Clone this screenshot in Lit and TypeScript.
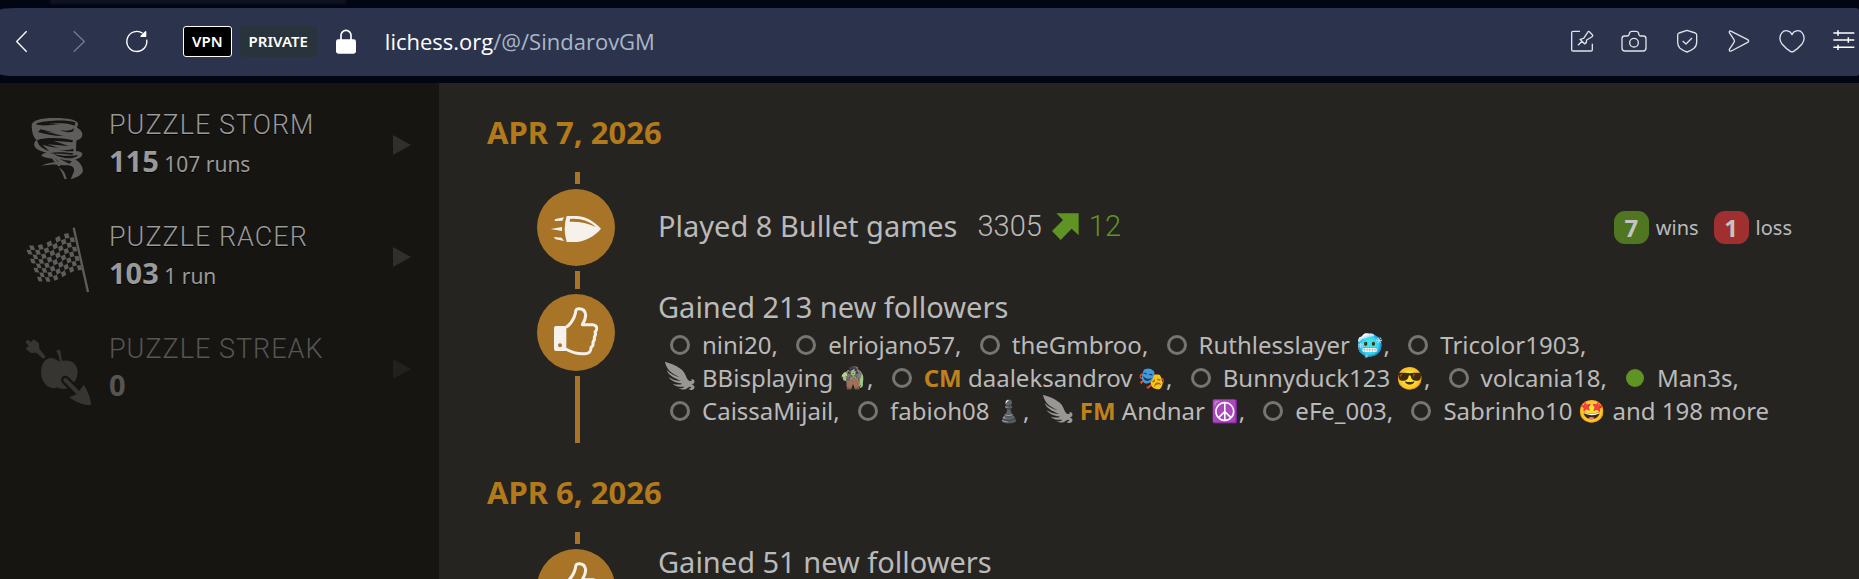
import { LitElement, html, svg, css, nothing } from "lit";
import { customElement, property } from "lit/decorators.js";

type Presence = "offline" | "online" | "patron";
interface Follower {
  name: string;
  title?: string;
  presence?: Presence;
  flair?: string;
}

const FOLLOWERS: Follower[] = [
  { name: "nini20" },
  { name: "elriojano57" },
  { name: "theGmbroo" },
  { name: "Ruthlesslayer", flair: "🥶" },
  { name: "Tricolor1903" },
  { name: "BBisplaying", presence: "patron", flair: "🧌" },
  { name: "daaleksandrov", title: "CM", flair: "🎭" },
  { name: "Bunnyduck123", flair: "😎" },
  { name: "volcania18" },
  { name: "Man3s", presence: "online" },
  { name: "CaissaMijail" },
  { name: "fabioh08", flair: "♟️" },
  { name: "Andnar", title: "FM", presence: "patron", flair: "☮️" },
  { name: "eFe_003" },
  { name: "Sabrinho10", flair: "🤩" },
];

/* ---------- browser toolbar icons ---------- */
const ICONS = {
  back: { box: "21 81 84 84", art: svg`<path d="M80 94 50 124.500 80 155"/>` },
  forward: { box: "196 81 84 84", art: svg`<path d="M222 94 254 124.500 222 155"/>` },
  reload: {
    box: "370 81 84 84",
    art: svg`<path d="M441 119A30 30 0 1 1 429 100"/><path d="M438 95V109H424Z" fill="currentColor"/>`,
  },
  lock: {
    box: "999 81 84 84",
    art: svg`<path d="M1026 122V106a15 15 0 0 1 30 0v16" stroke-width="5"/><rect x="1011" y="118" width="60" height="43" rx="7" fill="currentColor" stroke="none"/>`,
  },
  pin: {
    box: "84 81 84 84",
    art: svg`<path d="M120 94H99q-4 0-4 4v51q0 4 4 4h54q4 0 4-4V131"/><path d="M114 136 126 124M119 117 135 133M122 119Q129 114 131 115L143 97Q145 92 149 96L157 104Q160 108 155 111L140 120Q141 127 134 132"/>`,
  },
  camera: {
    box: "240 81 84 84",
    art: svg`<path d="M254 108h8q4 0 5-4l2-6q2-4 6-4h14q4 0 6 4l2 6q1 4 5 4h8q8 0 8 8v28q0 9-9 9H255q-9 0-9-9v-28q0-8 8-8Z"/><circle cx="282" cy="128" r="13"/>`,
  },
  shield: {
    box: "398 81 84 84",
    art: svg`<path d="M440 91 465 99q4 2 4 6v22q0 12-8 18-10 8-21 11-11-3-21-11-7-6-7-18V105q0-4 4-6Z"/><path d="M427 123 437 132 455 114"/>`,
  },
  send: {
    box: "558 81 84 84",
    art: svg`<path d="M577 94 626 119q6 4 0 8L577 153q-7 2-6-5l14-21q3-4 0-8L571 98q-1-7 6-4Z"/>`,
  },
  heart: {
    box: "714 81 84 84",
    art: svg`<path d="M756 104c-5-14-23-15-30-6-9 10-8 24 0 34 7 8 15 16 25 22q5 3 10 0c10-6 18-14 25-22 8-10 9-24 0-34-7-9-25-8-30 6Z"/>`,
  },
  sliders: {
    box: "870 81 84 84",
    art: svg`<path d="M880 99h63M880 120h63M880 142h63M894 91v16M925 112v16M894 134v16" stroke-width="4.500"/>`,
  },
};

/* ---------- puzzle icons ---------- */
const STORM = svg`
  <path d="M95 108C94 92 120 84 165 84 205 84 236 90 234 103L231 113C250 122 252 140 238 148L229 152 228 183C244 184 250 190 246 196 243 204 232 208 221 210L219 203C228 202 234 198 232 195 205 200 180 197 160 191 180 204 208 207 218 204 238 212 252 232 248 246 244 256 226 264 212 268L222 244C224 230 214 224 190 226 165 222 148 224 124 228 140 219 158 216 176 216L168 208C155 205 140 206 126 199 122 194 128 190 140 188 110 182 100 170 103 160 104 153 108 152 110 150 98 140 96 124 95 108Z"/>
  <path d="M160 206C176 222 190 244 197 267" fill="none" stroke="currentColor" stroke-width="7"/>
  <g class="cut">
    <path d="M112 99C140 91 200 88 226 97L224 107C210 99 170 98 146 101L180 103C150 105 122 109 108 103Z"/>
    <path d="M122 118 165 128 134 124 190 138C160 138 135 133 114 126Z"/>
    <path d="M180 120C200 124 215 122 222 114L220 124C205 129 194 126 180 120Z"/>
    <path d="M112 150C140 142 180 142 219 151L217 157 160 152 206 168 142 163 178 174C150 172 134 166 126 163L148 184C126 176 112 164 112 150Z"/>
    <path d="M162 177C190 183 210 180 220 176L220 184 200 184Z"/>
    <path d="M150 189C175 184 206 188 219 190L218 195C196 190 170 194 150 189Z"/>
    <path d="M178 206 206 213 196 209 216 214 208 221Z"/>
    <path d="M172 229C190 227 210 228 217 234 214 248 208 258 203 264 196 250 188 238 172 229Z"/>
  </g>`;

/** Chequered cloth: a wavy 11×8 grid where every other cell is filled. */
function chequers(): string {
  const cols = 11;
  const rows = 8;
  const at = (c: number, r: number): string => {
    const u = c / cols;
    const v = r / rows;
    const x = 74 + 144 * u + v * (42 - 14 * u);
    const wave = Math.sin(u * Math.PI * 2 - 0.6) * 7;
    const y = 470 - 38 * u + wave + v * (108 + 4 * u);
    return `${x.toFixed(1)} ${y.toFixed(1)}`;
  };
  let d = "";
  for (let c = 0; c < cols; c++)
    for (let r = 0; r < rows; r++)
      if ((c + r) % 2) d += `M${at(c, r)}L${at(c + 1, r)}L${at(c + 1, r + 1)}L${at(c, r + 1)}Z`;
  return d;
}
const RACER = svg`<path d=${chequers()}/><path d="M221 413 264 606" fill="none" stroke="currentColor" stroke-width="7"/>`;

const STREAK = svg`
  <path d="M76 156 84 149 93 157 101 148 117 160 118 176 137 200 130 207 109 188 93 189 77 176 86 167Z"/>
  <path d="M169 184q5-7 12-3l5 33-7 2q-1-20-10-32Z"/>
  <path d="M178 215C200 207 232 212 233 246 232 266 222 282 210 290 204 298 184 299 172 292 158 299 138 292 128 270 118 244 124 206 153 204 166 205 172 211 178 215Z"/>
  <path class="seam" d="M196 270 236 310" fill="none" stroke-width="26" stroke-linecap="round"/>
  <path d="M196 270 232 306" fill="none" stroke="currentColor" stroke-width="12" stroke-linecap="round"/>
  <path d="M251 284Q270 312 274 346 238 346 208 322L226 314 240 300Z"/>`;

/* ---------- timeline icons ---------- */
const BULLET = svg`
  <path d="M320 378h32c28 2 52 18 71 38-19 22-45 37-72 40h-31q-12-40 0-78Z"/>
  <path d="M286 387 312 382 307 392 283 393ZM272 417 306 411V423ZM281 441 305 443 312 453 287 448Z"/>
  <path d="M330 387c30-3 55 5 78 24-25-12-50-17-79-16Z" fill="#a87427"/>`;
const THUMB = svg`
  <path fill-rule="evenodd" d="M168 168h26q5 0 5 5v66q0 4-5 4h-26q-6 0-6-6v-63q0-6 6-6Zm12 52a6 6 0 1 0 0 12 6 6 0 0 0 0-12Z"/>
  <path d="M198 172q16-10 25-32 4-10 4-16 1-8 10-8 18 0 20 18 0 14-10 30h31q13 2 12 12-1 8-5 9 4 10-2 16 2 9-4 15 2 12-6 16 1 18-18 19-30 2-58-14" fill="none" stroke="currentColor" stroke-width="9" stroke-linejoin="round"/>`;

const WING = svg`<path d="M495 277C518 284 548 295 556 316 561 330 566 336 572 335 577 334 577 331 573 329 582 328 586 335 582 341 580 344 578 345 575 346 582 346 586 352 582 358 578 363 569 363 566 358 568 359 573 358 573 354 572 351 568 352 564 355 556 362 543 362 534 357 545 358 550 355 553 352 540 354 526 351 518 343 530 347 540 346 547 343 528 341 512 334 506 324 520 333 532 335 543 334 520 327 504 315 500 302 512 315 526 321 539 323 514 313 499 299 495 277Z"/>`;

@customElement("user-link")
class UserLink extends LitElement {
  @property({ attribute: false }) user!: Follower;
  @property({ type: Boolean }) last = false;

  static styles = css`
    a {
      color: inherit;
      text-decoration: none;
      white-space: nowrap;
    }
    .presence {
      display: inline-block;
      box-sizing: border-box;
      width: 20px;
      height: 20px;
      margin: 0 12px;
      vertical-align: -1px;
      border: 3px solid #777573;
      border-radius: 50%;
    }
    .presence.online {
      border: 1px solid transparent;
      background: #5f9324 padding-box;
    }
    .wing {
      width: 30px;
      height: 30px;
      margin: 0 7px;
      vertical-align: -4px;
      fill: #999794;
    }
    .title {
      color: #bf811d;
      font-weight: 700;
    }
    .flair {
      font-family: "Noto Color Emoji", "Noto Sans", sans-serif;
      font-size: 22px;
      line-height: 1;
      vertical-align: 1px;
    }
  `;

  render() {
    const { name, title, flair, presence = "offline" } = this.user;
    return html`<a href="#${name}">${presence === "patron"
      ? html`<svg class="wing" viewBox="495 275 90 90">${WING}</svg>`
      : html`<span class="presence ${presence}"></span>`}${title
      ? html`<span class="title">${title}</span> `
      : nothing}${name}${flair ? html` <span class="flair">${flair}</span>` : nothing}${this.last ? nothing : ","}</a>`;
  }
}

@customElement("app-root")
class AppRoot extends LitElement {
  static styles = css`
    :host {
      display: flex;
      flex-direction: column;
      height: 100vh;
      overflow: hidden;
      background: #020512;
      color: #bababa;
      font-family: "Noto Sans", "Open Sans", sans-serif;
    }
    * {
      box-sizing: border-box;
    }
    svg {
      display: block;
    }
    button {
      padding: 0;
      border: 0;
      background: none;
      font: inherit;
      color: inherit;
    }
    h2,
    h3,
    p {
      margin: 0;
    }

    .tabs {
      flex: none;
      height: 8px;
      display: flex;
      padding-left: 50px;
    }
    .tab {
      width: 296px;
      height: 5px;
      background: linear-gradient(#1d1f30, #020512);
      filter: blur(1px);
    }
    .toolbar {
      flex: none;
      display: flex;
      align-items: center;
      height: 68px;
      padding: 0 1px 0 7px;
      border-radius: 16px 4px 4px 16px / 2px;
      background: #2c334d;
      color: #fff;
    }
    .icon-button svg,
    .lock {
      width: 28px;
      height: 28px;
      fill: none;
      stroke: currentColor;
      stroke-width: 4;
      stroke-linejoin: round;
    }
    .toolbar > * {
      margin-bottom: 2px;
    }
    .history {
      display: flex;
      gap: 30px;
      margin-right: 32px;
    }
    .icon-button:disabled {
      color: #747b90;
    }
    .badge {
      height: 31px;
      padding: 0 8px;
      border: 1px solid #fff;
      border-radius: 3px;
      background: #000;
      font: 600 15px/29px "Noto Sans", sans-serif;
    }
    .badge.private {
      margin-left: 8px;
      margin-right: 15px;
      border-color: #28333b;
      background: #28333b;
    }
    .address {
      margin-left: 25px;
      margin-right: auto;
      color: #a9b6c6;
      font: 22px/32px "Open Sans", sans-serif;
      text-decoration: none;
    }
    .host {
      color: #fff;
    }
    .actions {
      display: flex;
      justify-content: space-between;
      width: 290px;
      color: #dfe3e6;
    }
    .actions .icon-button:last-child {
      color: #fff;
    }

    .page {
      flex: 1;
      min-height: 0;
      display: flex;
      margin-top: 7px;
      background: #262421;
    }
    .side {
      flex: none;
      width: 439px;
      padding-top: 9px;
      background: #161512;
    }
    .puzzle {
      display: flex;
      align-items: center;
      height: 112px;
      padding: 0 28px 0 25px;
      color: #999;
      text-decoration: none;
      text-shadow: 0 1px 0 #000;
    }
    .puzzle.empty {
      color: #565553;
      text-shadow: none;
    }
    .puzzle-icon {
      width: 66px;
      height: 66px;
      margin-right: 18px;
      color: #5e5d5b;
      fill: currentColor;
    }
    .empty .puzzle-icon {
      color: #363532;
    }
    .cut {
      fill: #161512;
    }
    .seam {
      stroke: #161512;
    }
    .puzzle-text {
      flex: 1;
      padding-bottom: 8px;
    }
    .puzzle h3 {
      font: 300 27px/36px Roboto, sans-serif;
      letter-spacing: 1px;
      text-transform: uppercase;
    }
    .puzzle p {
      font-size: 21px;
      line-height: 36px;
    }
    .puzzle strong {
      font-size: 29px;
      line-height: 36px;
    }
    .caret {
      width: 18px;
      height: 20px;
      margin-bottom: 6px;
      fill: #302f2c;
    }
    .empty .caret {
      fill: #22211e;
    }

    .activity {
      flex: 1;
      min-width: 0;
      padding: 28px 67px 0 48px;
    }
    .day {
      margin-bottom: 28px;
    }
    .day h2 {
      margin-bottom: 19px;
      color: #b37a1c;
      font-size: 31px;
      line-height: 42px;
      text-transform: uppercase;
    }
    .entries {
      display: flex;
      flex-direction: column;
      gap: 5px;
      padding-left: 50px;
    }
    .entry {
      display: flex;
      gap: 43px;
    }
    .rail {
      flex: none;
      display: flex;
      flex-direction: column;
      align-items: center;
      gap: 5px;
      width: 78px;
    }
    .lead,
    .tail {
      width: 5px;
      margin-left: 2px;
      background: #a87427;
    }
    .lead {
      height: 12px;
    }
    .tail {
      flex: 1;
    }
    .disc {
      width: 78px;
      height: 77px;
      border-radius: 50%;
      background: #a87427;
      color: #f6f1ea;
      fill: currentColor;
    }
    .body {
      flex: 1;
      min-width: 0;
      padding-bottom: 16px;
      font-size: 24px;
      line-height: 33px;
    }
    .opening .body {
      padding-top: 17px;
      padding-bottom: 23px;
    }
    .headline {
      margin-bottom: 8px;
      font-size: 29px;
      line-height: 26px;
    }
    .games {
      display: flex;
      align-items: center;
      height: 77px;
    }
    .games .headline {
      margin: 0 20px 3px 0;
    }
    .rating {
      display: flex;
      align-items: center;
      gap: 10px;
      margin-bottom: 3px;
      font: 300 29px/28px Roboto, sans-serif;
    }
    .gain {
      display: flex;
      align-items: center;
      gap: 10px;
      color: #5f9324;
    }
    .gain svg {
      width: 27px;
      height: 27px;
      fill: currentColor;
    }
    .score {
      display: flex;
      align-items: center;
      gap: 15px;
      margin-left: auto;
      font-size: 20px;
    }
    .result {
      display: flex;
      align-items: center;
      gap: 7px;
    }
    .count {
      width: 35px;
      border-radius: 11px;
      background: #507622;
      color: #c5c4c2;
      font-size: 24px;
      line-height: 33px;
      text-align: center;
    }
    .count.loss {
      background: #a0302f;
    }
  `;

  private icon(name: keyof typeof ICONS, label: string, disabled = false) {
    const { box, art } = ICONS[name];
    return html`<button class="icon-button" aria-label=${label} ?disabled=${disabled}>
      <svg viewBox=${box}>${art}</svg>
    </button>`;
  }

  private puzzle(title: string, score: number, runs: string, box: string, art: unknown) {
    return html`<a class="puzzle ${runs ? "" : "empty"}" href="#${title}">
      <svg class="puzzle-icon" viewBox=${box}>${art}</svg>
      <div class="puzzle-text">
        <h3>${title}</h3>
        <p><strong>${score}</strong> ${runs}</p>
      </div>
      <svg class="caret" viewBox="0 0 18 20"><path d="M0 0 18 10 0 20Z" /></svg>
    </a>`;
  }

  private thumb() {
    return html`<svg class="disc" viewBox="111 72 234 231">${THUMB}</svg>`;
  }

  render() {
    return html`
      <div class="tabs"><div class="tab"></div></div>
      <nav class="toolbar">
        <div class="history">
          ${this.icon("back", "Back")} ${this.icon("forward", "Forward", true)} ${this.icon("reload", "Reload")}
        </div>
        <button class="badge">VPN</button>
        <span class="badge private">PRIVATE</span>
        <svg class="lock" viewBox=${ICONS.lock.box}>${ICONS.lock.art}</svg>
        <a class="address" href="#"><span class="host">lichess.org</span>/@/SindarovGM</a>
        <div class="actions">
          ${this.icon("pin", "Pin")} ${this.icon("camera", "Snapshot")} ${this.icon("shield", "Protection")}
          ${this.icon("send", "Send")} ${this.icon("heart", "Bookmark")} ${this.icon("sliders", "Easy setup")}
        </div>
      </nav>
      <div class="page">
        <aside class="side">
          ${this.puzzle("Puzzle Storm", 115, "107 runs", "75 75 198 198", STORM)}
          ${this.puzzle("Puzzle Racer", 103, "1 run", "75 411 198 198", RACER)}
          ${this.puzzle("Puzzle Streak", 0, "", "75 147 198 198", STREAK)}
        </aside>
        <main class="activity">
          <section class="day">
            <h2>Apr 7, 2026</h2>
            <div class="entries">
              <div class="entry opening">
                <div class="rail">
                  <div class="lead"></div>
                  <svg class="disc" viewBox="231 297 234 231">${BULLET}</svg>
                  <div class="tail"></div>
                </div>
                <div class="body">
                  <div class="games">
                    <p class="headline">Played 8 Bullet games</p>
                    <div class="rating">
                      3305
                      <span class="gain">
                        <svg viewBox="754 77 81 81"><path d="M767 78H834V144L813 124 780 158 754 131 787 98Z" /></svg>12
                      </span>
                    </div>
                    <div class="score">
                      <span class="result"><strong class="count">7</strong>wins</span>
                      <span class="result"><strong class="count loss">1</strong>loss</span>
                    </div>
                  </div>
                </div>
              </div>
              <div class="entry">
                <div class="rail">
                  ${this.thumb()}
                  <div class="tail"></div>
                </div>
                <div class="body">
                  <p class="headline">Gained 213 new followers</p>
                  ${FOLLOWERS.map(
                    (user, i) => html`<user-link .user=${user} ?last=${i === FOLLOWERS.length - 1}></user-link> `
                  )}and 198 more
                </div>
              </div>
            </div>
          </section>
          <section class="day">
            <h2>Apr 6, 2026</h2>
            <div class="entries">
              <div class="entry opening">
                <div class="rail">
                  <div class="lead"></div>
                  ${this.thumb()}
                  <div class="tail"></div>
                </div>
                <div class="body"><p class="headline">Gained 51 new followers</p></div>
              </div>
            </div>
          </section>
        </main>
      </div>
    `;
  }
}
